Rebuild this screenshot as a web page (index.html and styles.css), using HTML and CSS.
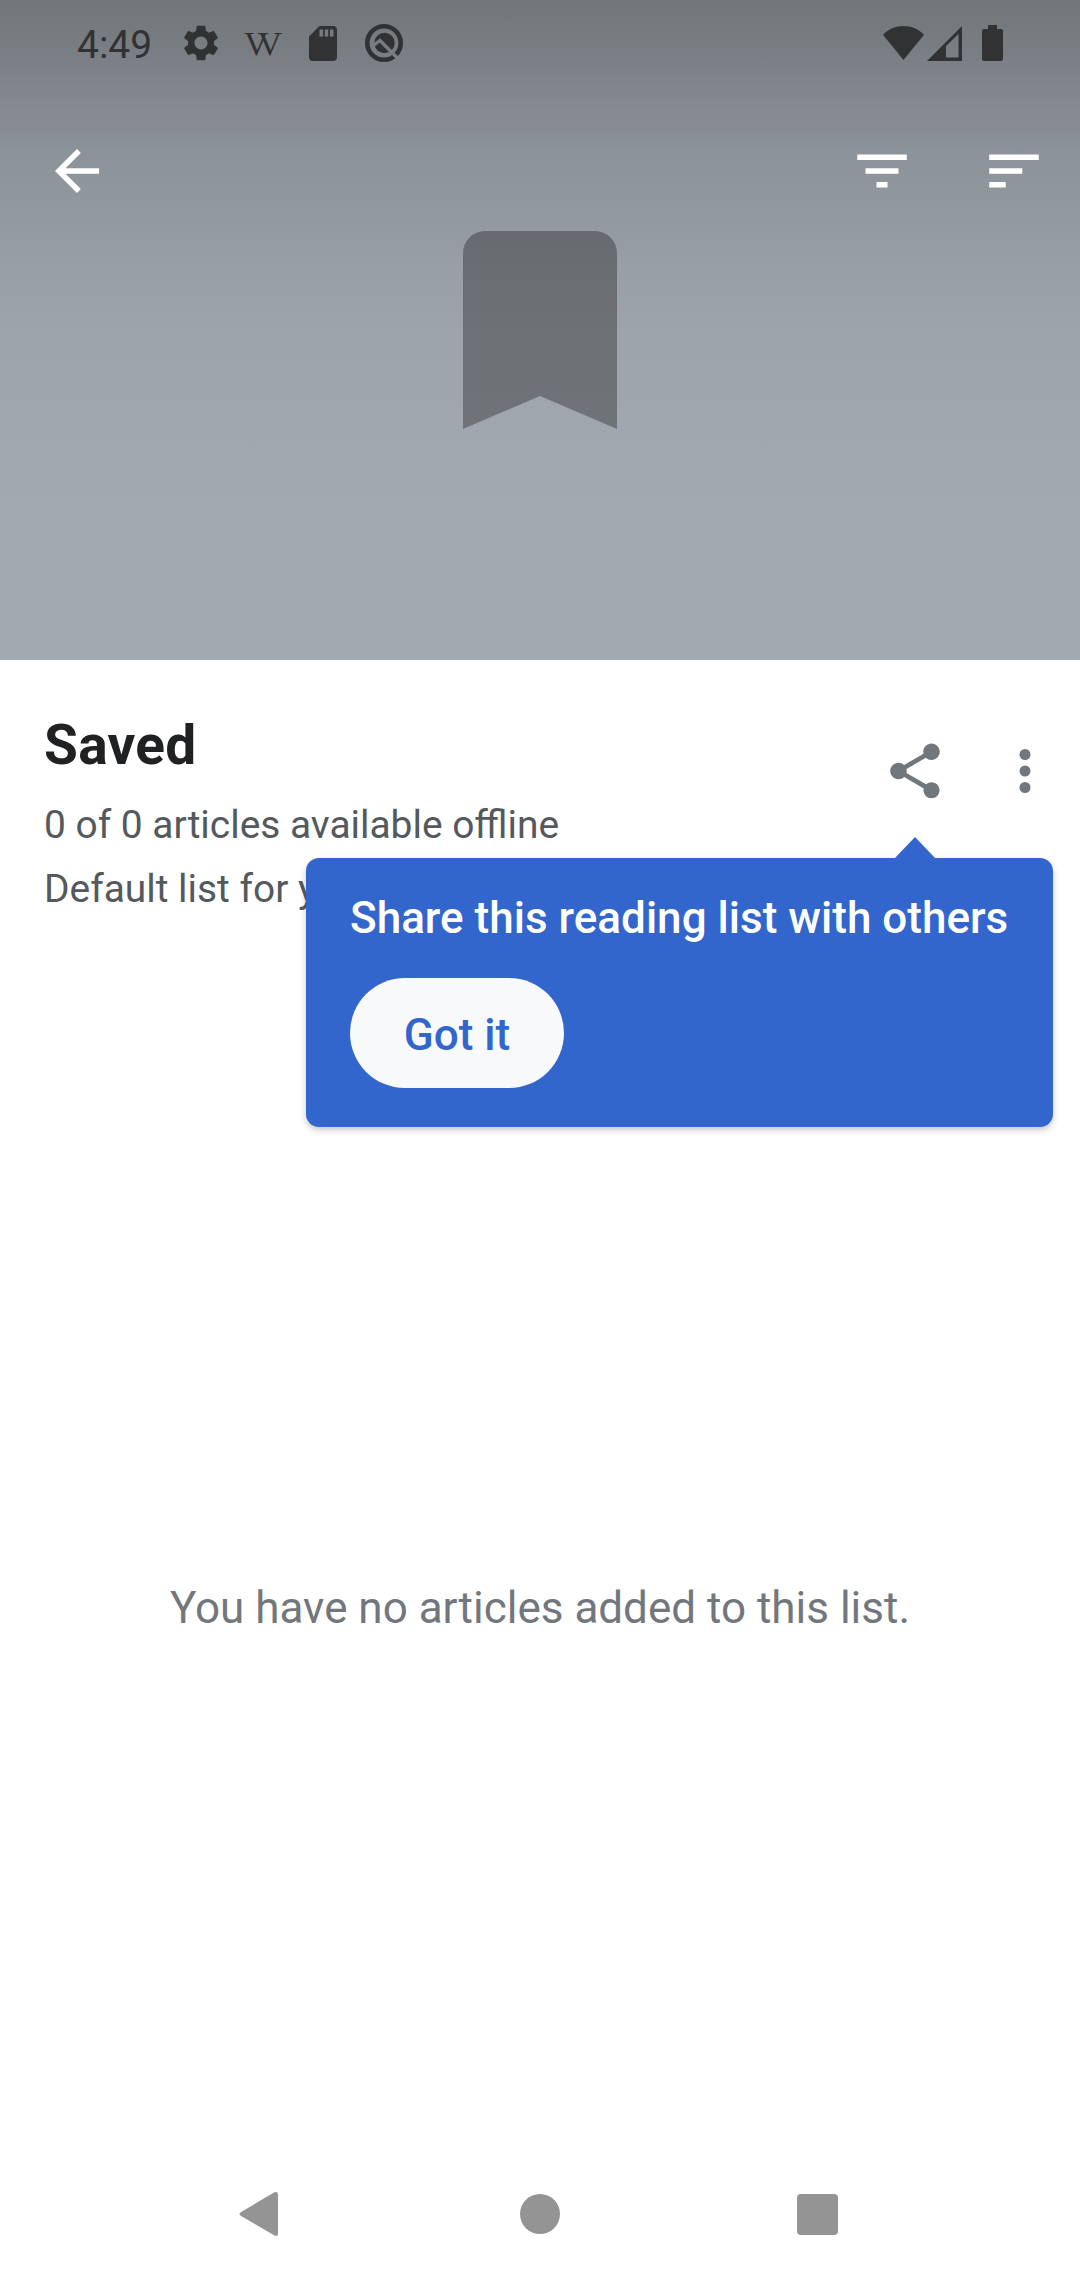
FILE: index.html
```html
<!DOCTYPE html>
<html lang="en">
<head>
<meta charset="utf-8">
<title>Saved</title>
<link rel="stylesheet" href="styles.css">
</head>
<body>
<div class="screen">
  <header class="hero">
    <div class="status">
      <span class="clock">4:49</span>
      <svg class="gear" viewBox="2 2 20 20"><path d="M19.14 12.94c.04-.3.06-.61.06-.94 0-.32-.02-.64-.07-.94l2.03-1.58c.18-.14.23-.41.12-.61l-1.92-3.32c-.12-.22-.37-.29-.59-.22l-2.39.96c-.5-.38-1.03-.7-1.62-.94l-.36-2.54c-.04-.24-.24-.41-.48-.41h-3.84c-.24 0-.43.17-.47.41l-.36 2.54c-.59.24-1.13.57-1.62.94l-2.39-.96c-.22-.08-.47 0-.59.22L2.74 8.87c-.12.21-.08.47.12.61l2.03 1.58c-.05.3-.09.63-.09.94s.02.64.07.94l-2.03 1.58c-.18.14-.23.41-.12.61l1.92 3.32c.12.22.37.29.59.22l2.39-.96c.5.38 1.03.7 1.62.94l.36 2.54c.05.24.24.41.48.41h3.84c.24 0 .44-.17.47-.41l.36-2.54c.59-.24 1.13-.56 1.62-.94l2.39.96c.22.08.47 0 .59-.22l1.92-3.32c.12-.22.07-.47-.12-.61l-2.01-1.58zM12 15.6c-1.98 0-3.6-1.62-3.6-3.6s1.62-3.6 3.6-3.6 3.6 1.62 3.6 3.6-1.62 3.6-3.6 3.6z"/></svg>
      <span class="wiki" aria-label="W">VV</span>
      <svg class="sd" viewBox="4 2 16 20" preserveAspectRatio="none"><path d="M18 2h-8L4.020 8 4 20c0 1.100.9 2 2 2h12c1.100 0 2-.9 2-2V4c0-1.100-.9-2-2-2zm-6 6h-2V4h2v4zm3 0h-2V4h2v4zm3 0h-2V4h2v4z"/></svg>
      <svg class="qicon" viewBox="0 0 38 38">
        <mask id="cut" maskUnits="userSpaceOnUse" x="0" y="0" width="38" height="38">
          <rect width="38" height="38" fill="#fff"/>
          <path class="cut-line" d="M7 22.500L15 16.500 34 35.500"/>
        </mask>
        <g mask="url(#cut)">
          <circle class="ring" cx="19" cy="19" r="16.700"/>
          <circle cx="19.500" cy="19" r="10.200"/>
        </g>
      </svg>
      <span class="spacer"></span>
      <svg class="wifi" viewBox="0 0 41 34"><path d="M20.500 34L0 8.800C5.500 3.200 12.500 0 20.500 0S35.500 3.200 41 8.800z"/></svg>
      <svg class="signal" viewBox="0 0 35 35"><path fill-rule="evenodd" d="M0 35L35 0v35zM19 20v11.500h12.500V8z"/></svg>
      <svg class="battery" viewBox="0 0 21 36"><path d="M6 0h9v4h4a2 2 0 0 1 2 2v28a2 2 0 0 1-2 2H2a2 2 0 0 1-2-2V6a2 2 0 0 1 2-2h4z"/></svg>
    </div>
    <nav class="toolbar">
      <svg class="icon" viewBox="0 0 24 24"><path d="M20 11H7.830l5.590-5.590L12 4l-8 8 8 8 1.410-1.410L7.830 13H20v-2z"/></svg>
      <span class="spacer"></span>
      <svg class="icon" viewBox="0 0 24 24"><path d="M10 18h4v-2h-4v2zM3 6v2h18V6H3zm3 7h12v-2H6v2z"/></svg>
      <svg class="icon" viewBox="0 0 24 24"><path d="M3 18h6v-2H3v2zM3 6v2h18V6H3zm0 7h12v-2H3v2z"/></svg>
    </nav>
    <svg class="bookmark" viewBox="0 0 154 198"><path d="M22 0h110a22 22 0 0 1 22 22v176l-77-33L0 198V22A22 22 0 0 1 22 0z"/></svg>
  </header>

  <section class="summary">
    <div class="details">
      <h1 class="title">Saved</h1>
      <p class="line">0 of 0 articles available offline</p>
      <p class="line">Default list for y</p>
    </div>
    <div class="actions">
      <div class="share">
        <svg class="icon" viewBox="0 0 24 24"><path d="M18 16.080c-.76 0-1.440.3-1.960.77L8.910 12.700c.05-.23.09-.46.09-.7s-.04-.47-.09-.7l7.050-4.110c.54.5 1.250.81 2.040.81 1.660 0 3-1.340 3-3s-1.340-3-3-3-3 1.340-3 3c0 .24.04.47.09.7L8.040 9.810C7.500 9.310 6.790 9 6 9c-1.660 0-3 1.340-3 3s1.340 3 3 3c.79 0 1.500-.31 2.040-.81l7.120 4.160c-.05.21-.08.43-.08.65 0 1.610 1.310 2.920 2.920 2.920s2.920-1.310 2.920-2.920-1.310-2.920-2.920-2.920z"/></svg>
        <div class="tooltip">
          <p class="tooltip-text">Share this reading list with others</p>
          <button class="confirm">Got it</button>
        </div>
      </div>
      <svg class="icon" viewBox="0 0 24 24"><circle cx="12" cy="6" r="2"/><circle cx="12" cy="12" r="2"/><circle cx="12" cy="18" r="2"/></svg>
    </div>
  </section>

  <main class="empty">You have no articles added to this list.</main>

  <footer class="navbar">
    <svg class="nav-back" viewBox="0 0 40 46"><path d="M2 21L35.500 1.200Q39 0 39 3.500v39Q39 46 35.500 44.600L2 25Q-1 23 2 21z"/></svg>
    <span class="nav-home"></span>
    <span class="nav-recent"></span>
  </footer>
</div>
</body>
</html>
```
FILE: styles.css
```css
* { box-sizing: border-box; }
body { margin: 0; background: #fff; font-family: Roboto, "Noto Sans", sans-serif; }
h1, p { margin: 0; font-weight: 400; }
svg { display: block; flex: none; fill: currentColor; }
.spacer { flex: 1; }
.icon { width: 66px; height: 66px; }

.screen { width: 1080px; height: 2280px; display: flex; flex-direction: column; background: #fff; overflow: hidden; }

.hero {
  height: 660px;
  flex: none;
  background: linear-gradient(#717678 0, #787d82 45px, #84878f 100px, #8b9299 150px, #92999f 220px, #989fa6 270px, #9da4ab 340px, #a0a7ae 440px, #a2a9b1 520px);
}
.status { height: 86px; padding: 0 77px; display: flex; align-items: center; color: #303234; }
.clock { width: 106px; font-size: 39px; line-height: 46px; margin-top: 3px; }
.gear { width: 36px; height: 36px; }
.wiki { width: 38px; margin-left: 25px; font: 34px/36px "Liberation Serif", serif; letter-spacing: -11px; white-space: nowrap; margin-top: 2px; }
.sd { width: 28px; height: 35px; margin-left: 27px; }
.qicon { width: 38px; height: 38px; margin-left: 28px; }
.ring { fill: none; stroke: currentColor; stroke-width: 4.600px; }
.cut-line { fill: none; stroke: #000; stroke-width: 3.400px; }
.wifi { width: 41px; height: 34px; }
.signal { width: 35px; height: 35px; margin-left: 3px; }
.battery { width: 21px; height: 36px; margin-left: 20px; }

.toolbar { height: 145px; padding: 52px 33px 0 44px; display: flex; gap: 66px; color: #fff; }
.bookmark { width: 154px; height: 198px; margin: 0 auto; color: #000; opacity: .3; }

.summary { height: 280px; flex: none; display: flex; justify-content: space-between; padding: 0 22px 0 44px; }
.details { padding-top: 53px; color: #54595d; }
.title { font-size: 55px; line-height: 65px; font-weight: 700; color: #202122; margin-bottom: 15px; letter-spacing: .3px; }
.line { font-size: 38.900px; line-height: 64px; white-space: nowrap; }
.actions { display: flex; gap: 44px; padding-top: 78px; color: #72777d; }
.share { position: relative; height: 66px; }
.tooltip {
  position: absolute;
  top: 120px;
  right: -105px;
  width: 747px;
  height: 269px;
  padding: 33px 44px;
  border-radius: 13px;
  background: #36c;
  color: #fff;
  box-shadow: 0 3px 6px rgba(0, 0, 0, .22);
}
.tooltip::before {
  content: "";
  position: absolute;
  top: -21px;
  right: 117px;
  width: 42px;
  height: 22px;
  background: #36c;
  clip-path: polygon(50% 0, 100% 100%, 0 100%);
}
.tooltip-text { font-size: 44px; line-height: 54px; font-weight: 500; white-space: nowrap; letter-spacing: .02px; }
.confirm {
  display: block;
  width: 214px;
  height: 110px;
  margin-top: 33px;
  padding: 3px 0 0;
  border: 0;
  border-radius: 55px;
  background: #f8f9fa;
  color: #36c;
  font: 500 44px/54px Roboto, sans-serif;
}

.empty { flex: 1; display: flex; align-items: center; justify-content: center; padding-top: 127px; font-size: 44px; line-height: 52px; color: #72777d; }

.navbar { height: 132px; flex: none; display: flex; justify-content: space-between; align-items: center; padding: 0 242px 0 239px; color: #949494; }
.nav-back { width: 40px; height: 46px; }
.nav-home { width: 40px; height: 40px; margin-left: 4px; border-radius: 50%; background: currentColor; }
.nav-recent { width: 41px; height: 41px; border-radius: 4px; background: currentColor; }
```
